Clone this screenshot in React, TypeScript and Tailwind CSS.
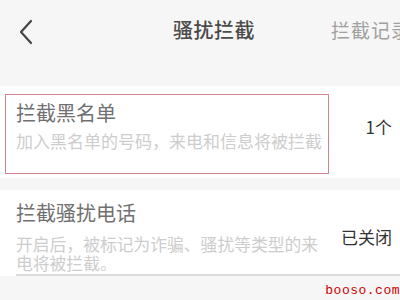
import React from "react";

export default function App() {
  const font = { fontFamily: '"Noto Sans CJK SC", "Noto Sans", sans-serif' };
  return (
    <div className="w-[400px] h-[300px] overflow-hidden bg-[#f6f6f6] relative" style={font}>
      {/* header */}
      <div className="h-[64px] relative">
        <svg className="absolute left-[18px] top-[19px]" width="16" height="26" viewBox="0 0 16 26">
          <path d="M13 2 L3 13 L13 24" fill="none" stroke="#444" strokeWidth="2.2" strokeLinecap="round" strokeLinejoin="round" />
        </svg>
        <div className="absolute left-[173px] top-[17px] text-[20px] leading-[26px] font-medium text-[#4a4a4a] tracking-[0.5px]">骚扰拦截</div>
        <div className="absolute left-[331px] top-[17px] text-[19px] leading-[26px] text-[#a0a0a0] whitespace-nowrap tracking-[1px]">拦截记录</div>
      </div>
      <div className="h-[22px]" />
      {/* card 1 */}
      <div className="bg-white relative h-[92px] flex items-start">
        <div className="pl-[16px] flex-1 pt-[14px]">
          <div className="text-[20px] leading-[26px] text-[#707070]">拦截黑名单</div>
          <div className="mt-[5px] text-[17px] leading-[20px] text-[#cdcdcd] whitespace-nowrap w-[308px] overflow-hidden">加入黑名单的号码，来电和信息将被拦截</div>
        </div>
        <div className="pr-[8px] pt-[30px] text-[17px] leading-[22px] text-[#333] w-[60px] text-right">1个</div>
        <div className="absolute left-[5px] top-[8px] w-[324px] h-[80px] border-[1.5px] border-[#d2848a]" />
      </div>
      <div className="h-[12px] bg-[#f6f6f6]" />
      {/* card 2 */}
      <div className="bg-white flex items-start h-[84px]">
        <div className="pl-[16px] flex-1 pt-[10px]">
          <div className="text-[20px] leading-[26px] text-[#707070]">拦截骚扰电话</div>
          <div className="mt-[9px] text-[16.8px] leading-[19px] text-[#cdcdcd] w-[310px]">开启后，被标记为诈骗、骚扰等类型的来电将被拦截。</div>
        </div>
        <div className="pr-[8px] pt-[36px] text-[17px] leading-[22px] text-[#333] whitespace-nowrap">已关闭</div>
      </div>
      <div className="bg-white pl-[16px]">
        <div className="h-[2px] bg-[#dcdcdc]" />
      </div>
      <div className="absolute right-[0px] top-[281px] text-[13px] text-[#cc0000] tracking-[0.5px]" style={{ fontFamily: '"Liberation Mono", monospace' }}>booso.com</div>
    </div>
  );
}
